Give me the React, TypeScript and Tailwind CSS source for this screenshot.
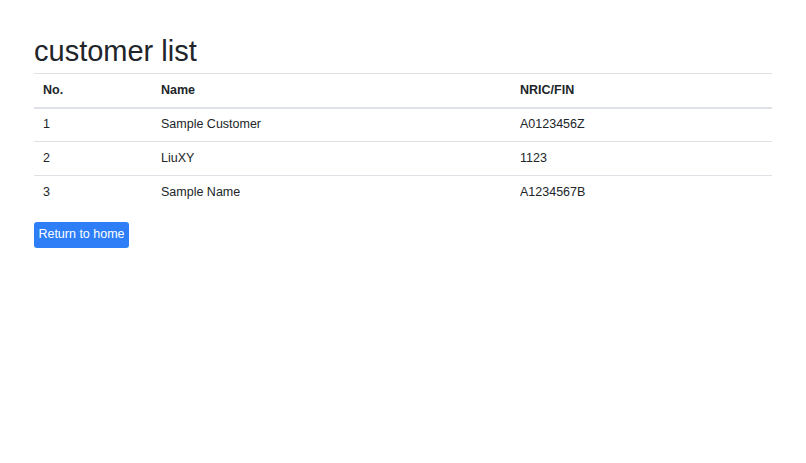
const rows = [
  ["1", "Sample Customer", "A0123456Z"],
  ["2", "LiuXY", "1123"],
  ["3", "Sample Name", "A1234567B"],
];

export default function App() {
  return (
    <div className="w-[806px] h-[463px] bg-white text-[#212529] font-[Liberation_Sans,Arial,sans-serif] px-[34px] pt-[34px]">
      <h1 className="text-[29px] leading-[34px] font-normal mb-[5px]">customer list</h1>
      <table className="w-full text-[12.5px] border-collapse">
        <thead>
          <tr className="border-t border-[#dee2e6] border-b-2 h-[34px]">
            <th className="text-left font-bold pl-[9px] w-[118px]">No.</th>
            <th className="text-left font-bold pl-[9px] w-[359px]">Name</th>
            <th className="text-left font-bold pl-[9px]">NRIC/FIN</th>
          </tr>
        </thead>
        <tbody>
          {rows.map((r, j) => (
            <tr key={r[0]} className={(j < rows.length - 1 ? "border-b border-[#dee2e6] " : "") + "h-[34px]"}>
              {r.map((c, i) => (
                <td key={i} className="pl-[9px]">{c}</td>
              ))}
            </tr>
          ))}
        </tbody>
      </table>
      <button className="mt-[12px] h-[26px] w-[95px] bg-[#2d7ef7] text-white text-[12.5px] rounded-[3px]">
        Return to home
      </button>
    </div>
  );
}
